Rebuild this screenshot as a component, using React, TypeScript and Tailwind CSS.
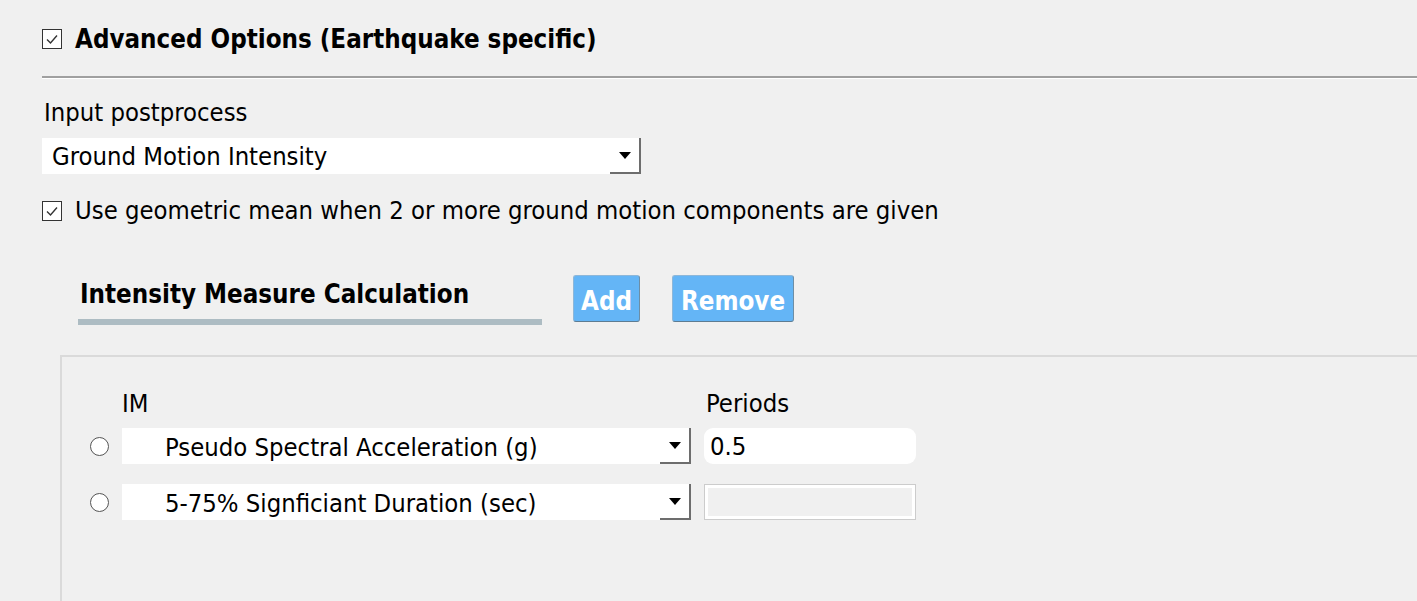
import React from 'react';

const font = { fontFamily: '"DejaVu Sans Condensed", "DejaVu Sans", sans-serif' };

function CheckBox() {
  return (
    <span className="flex h-[20px] w-[20px] shrink-0 items-center justify-center border border-[#333] bg-white">
      <svg width="14" height="14" viewBox="0 0 14 14">
        <path d="M2 7.5 L5.5 11 L12 3.5" fill="none" stroke="#333" strokeWidth="1.4" />
      </svg>
    </span>
  );
}

function Arrow() {
  return (
    <span className="flex h-full w-[31px] shrink-0 items-center justify-center border-r-2 border-b-2 border-r-[#6d6d6d] border-b-[#6d6d6d]">
      <svg width="12" height="7" viewBox="0 0 12 7">
        <path d="M0 0 L12 0 L6 7 Z" fill="#000" />
      </svg>
    </span>
  );
}

function Combo({ text, indent }: { text: string; indent: string }) {
  return (
    <div className="flex h-[36px] bg-white">
      <div className={`flex-1 overflow-hidden ${indent}`}>
        <div className="whitespace-nowrap text-[25.4px] leading-[30px] text-black">{text}</div>
      </div>
      <Arrow />
    </div>
  );
}

function Radio() {
  return <span className="h-[19px] w-[19px] shrink-0 rounded-full border border-[#555] bg-white" />;
}

export default function App() {
  return (
    <div className="h-[601px] overflow-hidden bg-[#f0f0f0] pl-[42px] pt-[26px] text-[25.4px] text-black" style={font}>
      <div className="flex items-center gap-[13px]">
        <CheckBox />
        <span className="text-[25.7px] font-bold leading-[26px]">Advanced Options (Earthquake specific)</span>
      </div>

      <div className="mt-[24px] h-[3px] border-t-2 border-b border-t-[#a0a0a0] border-b-white" />

      <div className="mt-[19px] pl-[2px] leading-[29px]">Input postprocess</div>

      <div className="mt-[11px] w-[599px]">
        <Combo text="Ground Motion Intensity" indent="pl-[10px] pt-[3px]" />
      </div>

      <div className="mt-[22px] flex items-center gap-[13px]">
        <CheckBox />
        <span className="leading-[29px]">Use geometric mean when 2 or more ground motion components are given</span>
      </div>

      <div className="mt-[54px] flex items-start pl-[36px]">
        <div className="w-[464px]">
          <div className="pl-[2px] text-[25.7px] font-bold leading-[30px]">Intensity Measure Calculation</div>
          <div className="mt-[10px] h-[6px] bg-[#adbcc3]" />
        </div>
        <button className="-mt-[4px] ml-[31px] h-[47px] w-[67px] rounded-[3px] border border-[#8db7d9] border-r-[#6d8ea6] border-b-[#5e7c92] bg-[#64b5f6] pt-[5px] text-[25.7px] font-bold text-white">
          Add
        </button>
        <button className="-mt-[4px] ml-[32px] h-[47px] w-[122px] rounded-[3px] border border-[#8db7d9] border-r-[#6d8ea6] border-b-[#5e7c92] bg-[#64b5f6] pt-[5px] text-[25.7px] font-bold text-white">
          Remove
        </button>
      </div>

      <div className="ml-[18px] mt-[30px] h-[300px] border-t-2 border-l-2 border-[#dadada] pl-[28px] pt-[32px]">
        <div className="flex">
          <span className="ml-[32px] w-[584px] leading-[29px]">IM</span>
          <span className="leading-[29px]">Periods</span>
        </div>
        <div className="mt-[10px] flex items-center gap-[13px]">
          <Radio />
          <div className="w-[569px]">
            <Combo text="Pseudo Spectral Acceleration (g)" indent="pl-[43px] pt-[4px]" />
          </div>
          <div className="flex h-[36px] w-[212px] items-center rounded-[9px] bg-white pl-[6px] leading-[29px]">0.5</div>
        </div>
        <div className="mt-[20px] flex items-center gap-[13px]">
          <Radio />
          <div className="w-[569px]">
            <Combo text="5-75% Signficiant Duration (sec)" indent="pl-[43px] pt-[4px]" />
          </div>
          <div className="h-[36px] w-[212px] border border-[#cccccc] bg-white p-[3px]">
            <div className="h-full w-full bg-[#f0f0f0]" />
          </div>
        </div>
      </div>
    </div>
  );
}
